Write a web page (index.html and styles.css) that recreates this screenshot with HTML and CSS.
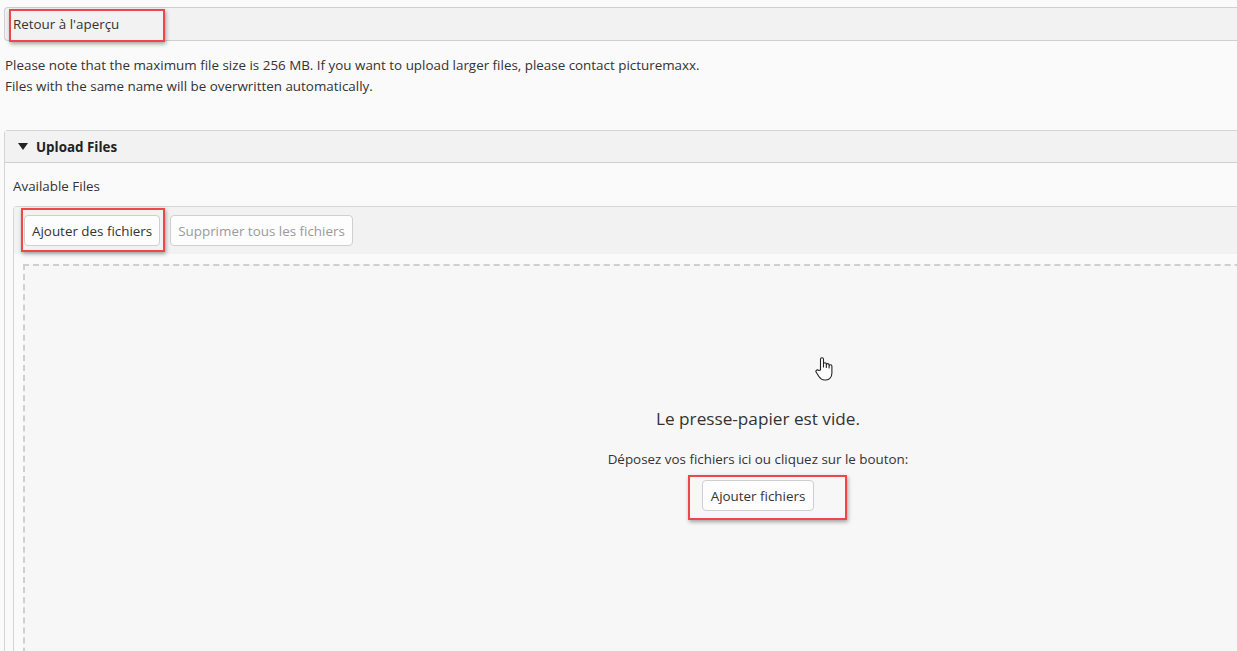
FILE: index.html
```
<!DOCTYPE html>
<html lang="fr">
<head>
<meta charset="utf-8">
<link rel="stylesheet" href="styles.css">
</head>
<body>
<div class="page">
  <div class="topbar"><span class="back">Retour à l'aperçu</span></div>
  <div class="notes">
    <p>Please note that the maximum file size is 256 MB. If you want to upload larger files, please contact picturemaxx.</p>
    <p>Files with the same name will be overwritten automatically.</p>
  </div>
  <div class="panel">
    <div class="panel-head"><span class="caret"></span><span class="panel-title">Upload Files</span></div>
    <div class="panel-body">
      <div class="label">Available Files</div>
      <div class="uploader">
        <div class="toolbar">
          <button class="btn">Ajouter des fichiers</button>
          <button class="btn disabled">Supprimer tous les fichiers</button>
        </div>
        <div class="dropzone">
          <div class="empty">Le presse-papier est vide.</div>
          <div class="hint">Déposez vos fichiers ici ou cliquez sur le bouton:</div>
          <button class="btn">Ajouter fichiers</button>
        </div>
      </div>
    </div>
  </div>
</div>
<div class="mark mark-back"></div>
<div class="mark mark-add"></div>
<div class="mark mark-add2"></div>
<svg class="cursor" width="22" height="26" viewBox="0 0 22 26">
  <path d="M6.5 14 V3.2 a1.5 1.5 0 0 1 3 0 V11 V8.2 a1.4 1.4 0 0 1 2.8 0 V11.5 V9 a1.4 1.4 0 0 1 2.8 0 V12 V10.2 a1.4 1.4 0 0 1 2.8 0 V17 c0 4 -2.5 7 -6 7 h-1.5 c-2.5 0 -4 -1.2 -5.3 -3.2 L2.2 16.3 a1.5 1.5 0 0 1 2.4 -1.8 Z" fill="#fff" stroke="#222" stroke-width="1.1" stroke-linejoin="round"/>
</svg>
</body>
</html>
```
FILE: styles.css
```
html, body {
  margin: 0;
  padding: 0;
  overflow: hidden;
  background: #fafafa;
}
body {
  font-family: "Open Sans", "Noto Sans", sans-serif;
  font-size: 13.4px;
  color: #333;
  width: 1237px;
  height: 651px;
  position: relative;
}
.page {
  width: 1520px;
  padding-top: 7px;
}
.topbar {
  margin-left: 4px;
  height: 32px;
  border: 1px solid #cfcfcf;
  border-right: none;
  border-radius: 4px 0 0 4px;
  background: #f2f2f2;
  display: flex;
  align-items: center;
  padding-left: 8px;
}
.back { color: #333; }
.notes {
  padding: 14px 0 0 5px;
}
.notes p {
  margin: 0;
  line-height: 21px;
}
.panel {
  margin: 33px 0 0 4px;
  border: 1px solid #d4d4d4;
  border-right: none;
  border-radius: 4px 0 0 0;
}
.panel-head {
  height: 31px;
  background: #f2f2f2;
  border-bottom: 1px solid #cfcfcf;
  display: flex;
  align-items: center;
  padding-left: 13px;
}
.caret {
  width: 0;
  height: 0;
  border-left: 5.5px solid transparent;
  border-right: 5.5px solid transparent;
  border-top: 7px solid #222;
  margin-right: 8px;
}
.panel-title { font-weight: bold; color: #222; }
.panel-body {
  padding: 13px 0 0 8px;
}
.label { line-height: 20px; }
.uploader {
  margin-top: 10px;
  border: 1px solid #d6d6d6;
  border-right: none;
  border-radius: 4px 0 0 0;
  padding: 0 0 0 9px;
  height: 460px;
}
.toolbar {
  margin-left: -9px;
  height: 47px;
  background: #f2f2f2;
  display: flex;
  align-items: center;
  gap: 10px;
  padding-left: 10px;
}
.btn {
  font-family: inherit;
  font-size: 13.4px;
  color: #333;
  background: #fdfdfd;
  border: 1px solid #cfcfcf;
  border-radius: 4px;
  height: 31px;
  padding: 0 7px;
  cursor: pointer;
}
.btn.disabled { color: #9a9a9a; }
.dropzone {
  margin-top: 10px;
  width: 1468px;
  height: 420px;
  border: 2px dashed #cfcfcf;
  border-right: none;
  border-bottom: none;
  background: #f7f7f7;
  display: flex;
  flex-direction: column;
  align-items: center;
  padding-top: 141px;
  box-sizing: border-box;
}
.empty { font-size: 17.2px; line-height: 24px; color: #333; }
.hint { margin-top: 19px; line-height: 18px; }
.dropzone .btn { margin-top: 12px; padding: 0 8px; }
.mark {
  position: absolute;
  border: 2px solid #f0464b;
  box-shadow: 1px 2px 4px rgba(0,0,0,0.35);
  box-sizing: border-box;
}
.mark-back { left: 9px; top: 9px; width: 156px; height: 33px; }
.mark-add { left: 21px; top: 208px; width: 144px; height: 44px; }
.mark-add2 { left: 688px; top: 475px; width: 159px; height: 45px; }
.cursor { position: absolute; left: 814px; top: 356px; }
```
